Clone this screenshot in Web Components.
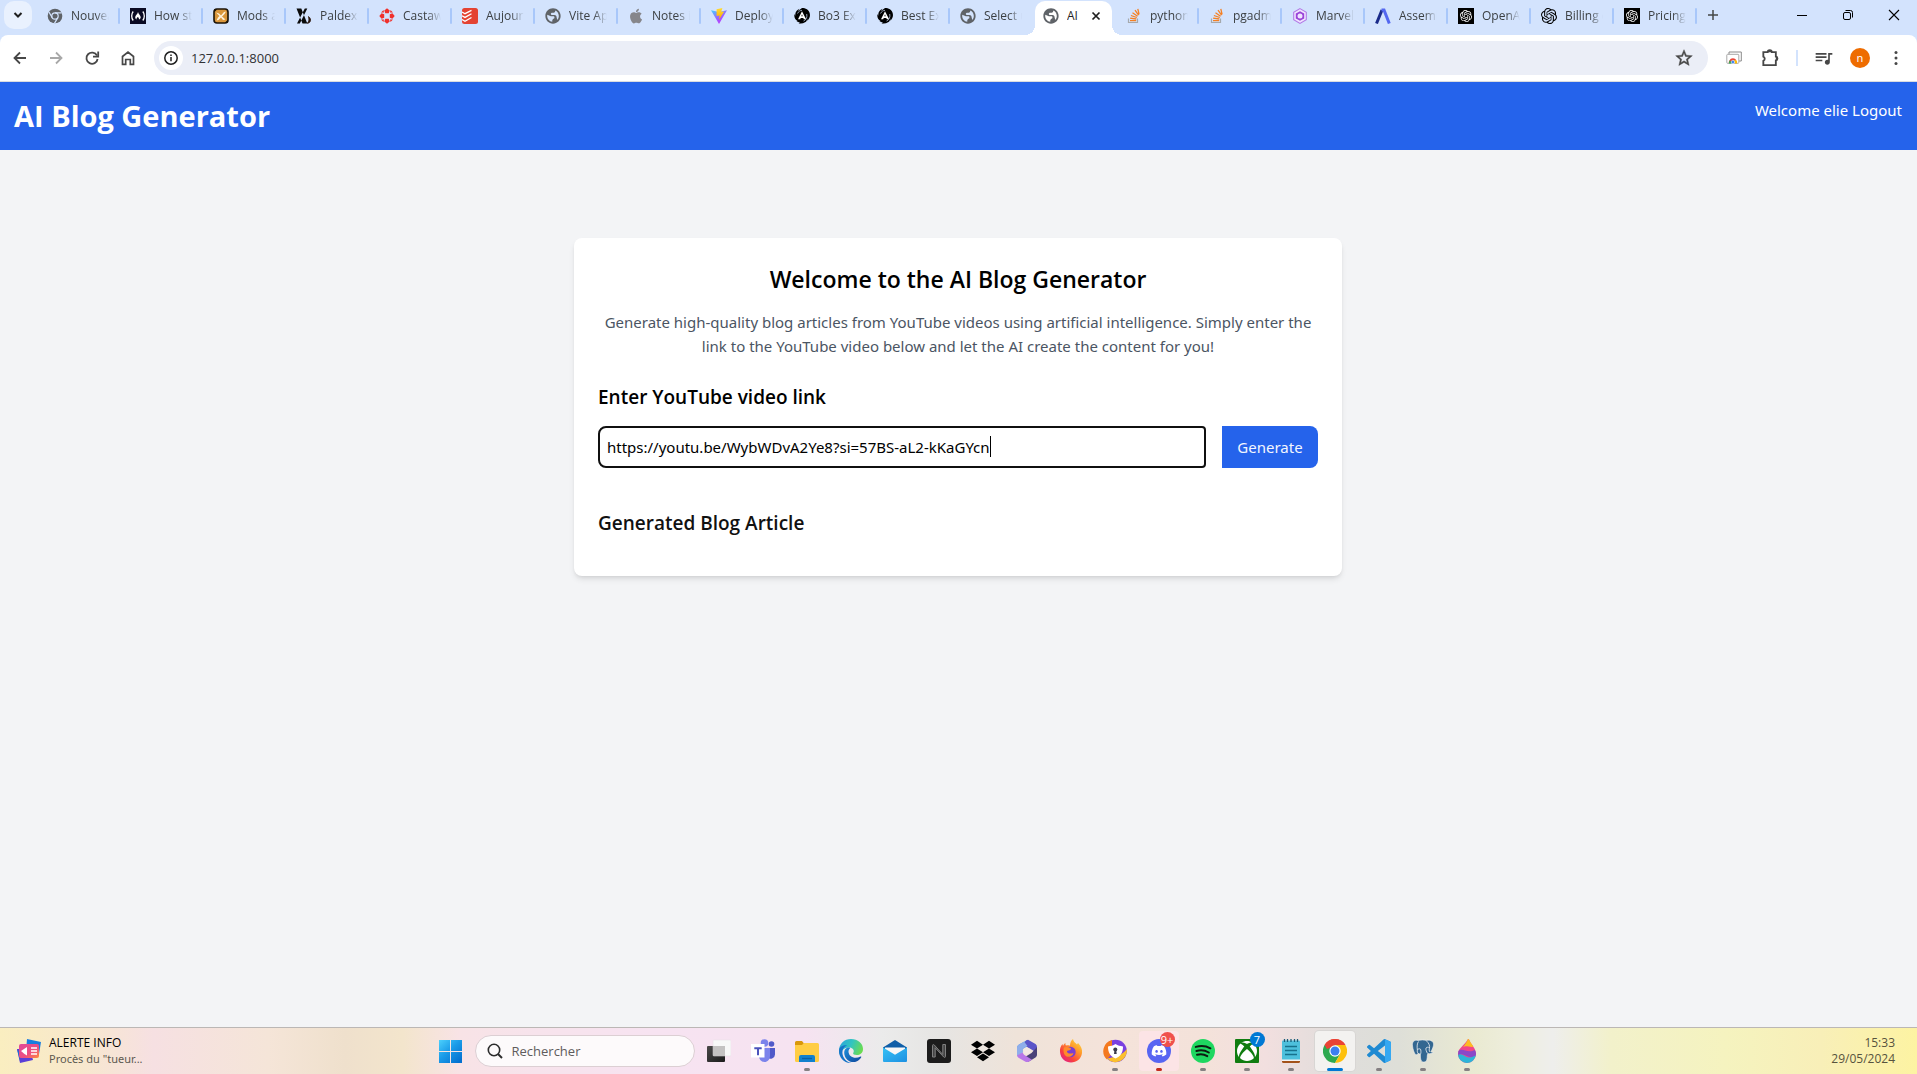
<!DOCTYPE html>
<html lang="fr">
<head>
<meta charset="utf-8">
<title>AI Blog Generator</title>
<style>
html, body { margin: 0; height: 100%; }
body { font-family: "Noto Sans", "Open Sans", sans-serif; font-size: 15px; line-height: 24px; color: #000; overflow: hidden; }
</style>
</head>
<body>
<desktop-screen></desktop-screen>
<script>
const openai = '<path d="M22.2819 9.8211a5.9847 5.9847 0 0 0-.5157-4.9108 6.0462 6.0462 0 0 0-6.5098-2.9A6.0651 6.0651 0 0 0 4.9807 4.1818a5.9847 5.9847 0 0 0-3.9977 2.9 6.0462 6.0462 0 0 0 .7427 7.0966 5.98 5.98 0 0 0 .511 4.9107 6.051 6.051 0 0 0 6.5146 2.9001A5.9847 5.9847 0 0 0 13.2599 24a6.0557 6.0557 0 0 0 5.7718-4.2058 5.9894 5.9894 0 0 0 3.9977-2.9001 6.0557 6.0557 0 0 0-.7475-7.0729zm-9.022 12.6081a4.4755 4.4755 0 0 1-2.8764-1.0408l.1419-.0804 4.7783-2.7582a.7948.7948 0 0 0 .3927-.6813v-6.7369l2.02 1.1686a.071.071 0 0 1 .038.052v5.5826a4.504 4.504 0 0 1-4.4945 4.4944zm-9.6607-4.1254a4.4708 4.4708 0 0 1-.5346-3.0137l.142.0852 4.783 2.7582a.7712.7712 0 0 0 .7806 0l5.8428-3.3685v2.3324a.0804.0804 0 0 1-.0332.0615L9.74 19.9502a4.4992 4.4992 0 0 1-6.1408-1.6464zM2.3408 7.8956a4.485 4.485 0 0 1 2.3655-1.9728V11.6a.7664.7664 0 0 0 .3879.6765l5.8144 3.3543-2.0201 1.1685a.0757.0757 0 0 1-.071 0l-4.8303-2.7865A4.504 4.504 0 0 1 2.3408 7.872zm16.5963 3.8558L13.1038 8.364 15.1192 7.2a.0757.0757 0 0 1 .071 0l4.8303 2.7913a4.4944 4.4944 0 0 1-.6765 8.1042v-5.6772a.79.79 0 0 0-.407-.667zm2.0107-3.0231l-.142-.0852-4.7735-2.7818a.7759.7759 0 0 0-.7854 0L9.409 9.2297V6.8974a.0662.0662 0 0 1 .0284-.0615l4.8303-2.7866a4.4992 4.4992 0 0 1 6.6802 4.66zM8.3065 12.863l-2.02-1.1638a.0804.0804 0 0 1-.038-.0567V6.0742a4.4992 4.4992 0 0 1 7.3757-3.4537l-.142.0805L8.704 5.459a.7948.7948 0 0 0-.3927.6813zm1.0976-2.3654l2.602-1.4998 2.6069 1.4998v2.9994l-2.5974 1.4997-2.6067-1.4997Z"/>';

// name: [viewBox, markup]
const ICONS = {
  chevron: ['0 0 16 16', '<path d="M4.5 6 8 9.5 11.5 6" fill="none" stroke="#1f1f1f" stroke-width="2"/>'],
  chromeGrey: ['0 0 24 24', '<circle cx="12" cy="12" r="11" fill="#5f6368"/><circle cx="12" cy="12" r="4.8" fill="none" stroke="#d3e3fd" stroke-width="1.8"/><path d="M12 7.2h10M7.8 14.4 2.9 6M16.2 14.4l-5 8.6" stroke="#d3e3fd" stroke-width="1.8"/>'],
  fcc: ['0 0 16 16', '<path fill="#0a0a23" d="M0 0h16v16H0z"/><path d="M3.2 3.5C1.2 6 1.2 10 3.2 12.5M12.8 3.5c2 2.500 2 6.500 0 9" fill="none" stroke="#fff" stroke-width="1.3"/><path d="M8 4c-.2 2-3 3.300-2.800 5.600.1 1 .8 1.700 1.500 1.900-.6-1 .2-1.800 1.200-2.600.6.8 1.500 1.700 1 2.600 1-.3 1.800-1.100 1.800-2.200C10.700 7.300 8.500 6 8 4z" fill="#fff"/>'],
  mods: ['0 0 16 16', '<rect x="1" y="1" width="14" height="14" rx="3" fill="#d9963b" stroke="#1c1408" stroke-width="1.600"/><path d="m3 4.500 3 1L8 7.500l3-3.500L13 3.500 11.500 6 9 8.500l3.500 3-2.500.5L8 9.500 5.500 12 3.500 12.500l1.500-3L6.500 8z" fill="#fff3dc"/><path d="m1 1 3 .5L1.500 4zM15 15l-3-.5 2.500-2.500z" fill="#1c1408"/>'],
  paldex: ['0 0 16 16', '<path d="M.5.500h4.800l6 15H6.500zM11.300.500H8.800L1 15.500h2.800z" fill="#0b0b0b"/><path d="M12.500 8.500c2 1.500 2.500 3.500 1.700 5-.6 1.200-1.700 1.800-3 1.700 1.600-1 2.200-2.700 1.300-6.700z" fill="#2b160c" stroke="#2b160c" stroke-width=".8"/>'],
  castaway: ['0 0 16 16', '<g fill="#f0302c"><path d="m8 .3 2.700 2.300-1 2.600H6.300l-1-2.600zM8 15.700l2.700-2.300-1-2.600H6.300l-1 2.600zM.3 8l2.300-2.700 2.600 1v3.400l-2.600 1zM15.700 8l-2.300-2.700-2.600 1v3.400l2.600 1z"/><path d="m2 4.500 2.500-2.500.5 2.500zM14 4.500 11.500 2 11 4.500zM2 11.500 4.500 14l.5-2.500zM14 11.500 11.500 14l-.5-2.500z"/></g>'],
  todoist: ['0 0 16 16', '<rect width="16" height="16" rx="2.500" fill="#e44332"/><path d="m0 4 3 1.700 6.500-3.400M0 7.700l3 1.700 6.500-3.600M0 11.500l3 1.700L9.500 9.500" fill="none" stroke="#fff" stroke-width="1.300"/>'],
  globe: ['1 1 22 22', '<circle cx="12" cy="12" r="9.500" fill="var(--globe-ground, #d3e3fd)"/><path fill="#5f6368" d="M12 1.500C6.200 1.500 1.500 6.200 1.500 12S6.200 22.500 12 22.500 22.500 17.800 22.500 12 17.800 1.500 12 1.500zm-1 18.430c-3.950-.49-7-3.850-7-7.930 0-.62.08-1.210.21-1.790L9 12.500h3.500c1 0 1.500.8 1.500 1.500 0 1.500-1 1.700-2 2l-1 1.930v2zm6.900-2.540L17 14c0-2-1-3.500-3-3.500h-3.500c-1 0-1.500-.5-1.500-1.200C9 8 10 7.500 11.500 7.500H13c1.100 0 2-.9 2-2v-.91c2.930 1.190 5 4.060 5 7.410 0 2.080-.8 3.970-2.100 5.390z"/>'],
  apple: ['0 0 24 24', '<path fill="#86868b" transform="translate(1 1) scale(.92)" d="M12.152 6.896c-.948 0-2.415-1.078-3.960-1.040-2.040.027-3.910 1.183-4.961 3.014-2.117 3.675-.546 9.103 1.519 12.090 1.013 1.454 2.208 3.090 3.792 3.039 1.520-.065 2.090-.987 3.935-.987 1.831 0 2.350.987 3.960.948 1.637-.026 2.676-1.480 3.676-2.948 1.156-1.688 1.636-3.325 1.662-3.415-.039-.013-3.182-1.221-3.220-4.857-.026-3.040 2.480-4.494 2.597-4.559-1.429-2.090-3.623-2.324-4.390-2.376-2-.156-3.675 1.090-4.610 1.090zM15.530 3.830c.843-1.012 1.400-2.427 1.245-3.830-1.207.052-2.662.805-3.532 1.818-.78.896-1.454 2.338-1.273 3.714 1.338.104 2.715-.688 3.559-1.701"/>'],
  vite: ['0 0 16 16', '<defs><linearGradient id="a" x1="0" y1="0" x2=".6" y2="1"><stop stop-color="#41d1ff"/><stop offset=".6" stop-color="#9b63fe"/><stop offset="1" stop-color="#bd34fe"/></linearGradient><linearGradient id="b" x1="0" y1="0" x2="0" y2="1"><stop stop-color="#ffdd35"/><stop offset="1" stop-color="#ffa800"/></linearGradient></defs><path d="M0 2.200 8 16l8-13.800L8 4z" fill="url(#a)"/><path d="m5.600 1.200 5.800-1.200-1.200 3.800 3-.4L8 11.800l.6-4.300-3 .5z" fill="url(#b)"/>'],
  arc: ['0 0 16 16', '<path d="M8 0c3.500 0 7 1.700 7.700 5.200.8 3-.2 5.800-2.700 7.600l1.200-2.800-2.200 3.800L9 15.300l-4.500.4L6 14.800 2.500 13.200l1-.2C1 11.500-.2 9 .5 6l.8 2C.8 4.500 3 1.800 5.500.8L4 3z"/><path d="M8 3.300 4 11.300h2.200l.5-1.200h2.600l.6 1.200h2.200zM8 6.300l.7 2H7.300z" fill="#fff" fill-rule="evenodd"/><path d="M3.500 5.500C4.500 3.500 6 2.500 8 2.300M12.700 6c.8 3-.5 6-3.200 7" fill="none" stroke="#d3e3fd" stroke-width=".7"/>'],
  stack: ['0 0 16 16', '<path d="M2.500 10.500v4h9v-4" fill="none" stroke="#a5a9ad" stroke-width="1.200"/><g stroke="#f48024" stroke-width="1.300"><path d="M4 12.600h6.200M4.100 10.200l6.200.8M4.900 7.500l5.900 2M6.500 4.700l5.100 3.500M9 2.200l3.600 5M11.800.8l1.300 5.500"/></g>'],
  hexagon: ['0 0 16 16', '<path d="m8 .6 6.300 3.700v7.400L8 15.400l-6.300-3.700V4.300z" fill="#f0e4ff" stroke="#b27be6" stroke-width="1.100"/><path d="m8 3.300 4.200 2.300v4.800L8 12.700l-4.200-2.300V5.600z" fill="#9a45d8"/><circle cx="8" cy="8" r="2.500" fill="#f0e4ff"/>'],
  assembly: ['0 0 16 16', '<path d="M1.500 15.500 7 2" fill="none" stroke="#1a2a8a" stroke-width="3"/><path d="M6.500 2h2.500l5.300 13.500" fill="none" stroke="#5468f0" stroke-width="3"/>'],
  openaiDark: ['0 0 24 24', '<path d="M0 0h24v24H0z"/><g fill="#fff" transform="translate(3 3) scale(.75)">' + openai + '</g>'],
  openai: ['0 0 24 24', openai],
  plus: ['0 0 16 16', '<path d="M8 3v10M3 8h10" stroke="#444746" stroke-width="1.500"/>'],
  closeSmall: ['0 0 16 16', '<path d="m4.500 4.500 7 7M11.500 4.500l-7 7" stroke="#1f1f1f" stroke-width="1.700"/>'],
  minimize: ['0 0 16 16', '<path d="M3 8.500h10" stroke="#000"/>'],
  restore: ['0 0 16 16', '<rect x="3.500" y="5.500" width="7" height="7" rx="1.500" fill="none" stroke="#000"/><path d="M5.500 3.500h5a2 2 0 0 1 2 2v5" fill="none" stroke="#000"/>'],
  close: ['0 0 16 16', '<path d="m3 3 10 10M13 3 3 13" stroke="#000" stroke-width="1.100"/>'],
  back: ['0 0 20 20', '<path d="M16 10H5M10 4.500 4.500 10l5.500 5.500" fill="none" stroke="#474747" stroke-width="1.800"/>'],
  forward: ['0 0 20 20', '<path d="M4 10h11M10 4.500l5.500 5.500-5.500 5.500" fill="none" stroke="#a8a8a8" stroke-width="1.800"/>'],
  reload: ['0 0 20 20', '<path d="M15 7.500A5.600 5.600 0 1 0 15.600 11" fill="none" stroke="#474747" stroke-width="1.800"/><path d="M16.200 3.500v5.200H11" fill="none" stroke="#474747" stroke-width="1.800"/>'],
  home: ['0 0 20 20', '<path d="M4.500 8.500 10 4l5.500 4.500V16.300h-3.200v-4.800H7.700v4.800H4.500z" fill="none" stroke="#474747" stroke-width="1.700"/>'],
  info: ['0 0 16 16', '<circle cx="8" cy="8" r="6.200" fill="none" stroke="#1f1f1f" stroke-width="1.500"/><path d="M8 7v4.300M8 4.600v1.500" stroke="#1f1f1f" stroke-width="1.500"/>'],
  star: ['0 0 24 24', '<path fill="#474747" stroke="#474747" stroke-width=".5" d="M22 9.240l-7.190-.62L12 2 9.190 8.630 2 9.240l5.460 4.730L5.820 21 12 17.270 18.180 21l-1.630-7.030L22 9.240zM12 15.400l-3.760 2.270 1-4.280-3.320-2.880 4.380-.38L12 6.100l1.710 4.040 4.380.38-3.320 2.880 1 4.280L12 15.400z"/>'],
  gallery: ['0 0 16 16', '<path d="M3 5V2h12.300v9H13" fill="none" stroke="#8b8b8b"/><rect x=".8" y="4.300" width="12" height="9" rx=".8" fill="#fff" stroke="#a8a8a8"/><path d="M2.800 13a4 4 0 0 1 .6-2.600 4 4 0 0 1 7-.2L9 11z" fill="#ea4335"/><path d="m3.400 10.400-.6 3h2.500l.7-1.400z" fill="#34a853"/><path d="M10.400 10.200H7.500L9 13.400h2a4 4 0 0 0-.6-3.200z" fill="#fbbc04"/><circle cx="6.900" cy="12" r="1.700" fill="#4285f4" stroke="#fff" stroke-width=".5"/>'],
  puzzle: ['0 0 24 24', '<path d="M4 5h5.200a2.500 2.500 0 0 1 5 0H19v5.200a2.400 2.400 0 0 1 0 4.700V20.500H4v-5.200a2.700 2.700 0 0 0 0-5z" fill="none" stroke="#474747" stroke-width="2.200"/><path d="M9.200 5a2.500 2.500 0 0 1 5 0zM19 10.200a2.400 2.400 0 0 1 0 4.700z" fill="#474747"/>'],
  music: ['0 0 24 24', '<path fill="#474747" d="M15 6H2v2h13V6zm0 4H2v2h13v-2zM2 16h8v-2H2v2zM17 6v8.180c-.31-.11-.65-.18-1-.18-1.660 0-3 1.340-3 3s1.340 3 3 3 3-1.340 3-3V8h3V6h-5z"/>'],
  dots: ['0 0 16 16', '<g fill="#474747"><circle cx="8" cy="2.500" r="1.500"/><circle cx="8" cy="8" r="1.500"/><circle cx="8" cy="13.500" r="1.500"/></g>'],
  news: ['0 0 24 24', '<defs><linearGradient id="a" x1="0" y1="0" x2="1" y2="1"><stop stop-color="#e0499b"/><stop offset=".6" stop-color="#ee4f80"/><stop offset="1" stop-color="#ff8a3d"/></linearGradient></defs><path d="m10 0 14 3-2 12-13-2z" fill="#1a7de0"/><path d="m0 10 3 14 13-3-3-11z" fill="#5a3fd8"/><path d="M0 10 3 22v-8z" fill="#1c6fd0"/><rect x="2" y="5" width="20" height="14" rx="2" fill="url(#a)"/><path d="m4 12 6-4v8.500L7.500 15z" fill="#fff"/><path d="M14 9h6M14 12h6M14 15h6" stroke="#fff" stroke-width="1.300"/>'],
  windows: ['0 0 23 23', '<defs><linearGradient id="a" gradientUnits="userSpaceOnUse" x1="0" y1="0" x2="20" y2="22"><stop stop-color="#4cd0fc"/><stop offset=".5" stop-color="#1a9be8"/><stop offset="1" stop-color="#0471d0"/></linearGradient></defs><path d="M0 0h11v11H0zM12 0h11v11H12zM0 12h11v11H0zM12 12h11v11H12z" fill="url(#a)"/>'],
  search: ['0 0 16 16', '<circle cx="7" cy="7" r="5.700" fill="none" stroke="#2b2b2b" stroke-width="1.600"/><path d="m11 11 4 4" stroke="#2b2b2b" stroke-width="1.900"/>'],
  taskview: ['0 0 24 24', '<defs><linearGradient id="a" x1="0" y1="0" x2="1" y2="1"><stop stop-color="#4a4949"/><stop offset="1" stop-color="#1b1b1b"/></linearGradient></defs><rect y="7" width="18" height="16" rx="1" fill="url(#a)"/><rect x="6" y="1" width="18" height="16" rx="1" fill="#f8f8f8" stroke="#e6dfe4" stroke-width=".5"/><path d="M6 7h12v10H6z" fill="#c4c2c2"/>'],
  teams: ['0 0 24 24', '<circle cx="13.500" cy="4" r="3.800" fill="#7b83eb"/><circle cx="20.500" cy="5" r="2.800" fill="#5059c9"/><path d="M17 9h7v6.500a4.500 4.500 0 0 1-7 3.500z" fill="#5059c9"/><path d="M8 9h11v7.500c0 4-2.500 6.500-5.500 6.500S8 20.500 8 17z" fill="#7b83eb"/><path d="M0 5h13.500v13.500H0z" fill="#fff"/><path d="M3.300 8.200h7.400v2H8v6H6v-6H3.300z" fill="#4b53bc"/>'],
  explorer: ['0 0 24 24', '<path d="M0 3.500A1.500 1.500 0 0 1 1.500 2H7l2 2.500L7 7H0z" fill="#d9980b"/><path d="M0 6h7l2-2h13.500A1.500 1.500 0 0 1 24 5.500v16a1.500 1.500 0 0 1-1.500 1.500h-21A1.500 1.500 0 0 1 0 21.500z" fill="#ffcd44"/><path d="M4 23v-5a2 2 0 0 1 2-2h12a2 2 0 0 1 2 2v5z" fill="#1181ce"/><path d="M7 19.500h10" stroke="#0a5fa5" stroke-width="1.300"/>'],
  edge: ['0 0 24 24', '<defs><linearGradient id="a" x1="0" y1=".2" x2="1" y2=".5"><stop stop-color="#2aa6dc"/><stop offset=".5" stop-color="#32c4c0"/><stop offset="1" stop-color="#6bdc50"/></linearGradient><linearGradient id="b" x1="0" y1="0" x2="1" y2="1"><stop stop-color="#1b8fdc"/><stop offset="1" stop-color="#10459a"/></linearGradient></defs><path d="M0 12C0 4.500 5.500 0 12 0c7 0 12 4.500 12 10 0 4-3 6-6.300 6-2.500 0-4-1-3.500-2 1.800-3-.8-5.500-4.200-5.500C4 8.500 1 13 1.500 17 .5 15.500 0 13.800 0 12z" fill="url(#a)"/><path d="M0 12c0-4 4-6.300 8-5.500-3 .8-4.800 4-4.600 7.500.3 5 4 9 9 9.900C5 24.500 0 18.500 0 12z" fill="#1674c8"/><path d="M8.500 8.600C5 10 4.500 14 6 17.500c2 4.500 7 7 12 4.700 1.800-.9 3.300-2.400 4.200-4 .3-.5-.2-.9-.7-.6-5.500 3-12 .4-12-5 0-1.800.8-2.800 1.800-3.700-.8-.4-1.900-.5-2.800-.3z" fill="url(#b)"/>'],
  mail: ['0 0 24 24', '<defs><linearGradient id="a" x1="0" y1="0" x2="1" y2="1"><stop stop-color="#35c1f5"/><stop offset="1" stop-color="#1c90e2"/></linearGradient></defs><path d="M0 8.500 12 1l12 7.500v3H0z" fill="#0f5ea8"/><path d="M2 8.500h20v3L12 17.500 2 11.500z" fill="#f7f7f7"/><path d="M0 8.500 12 15.800 24 8.500V22a1 1 0 0 1-1 1H1a1 1 0 0 1-1-1z" fill="url(#a)"/>'],
  notion: ['0 0 24 24', '<rect width="24" height="24" rx="3" fill="#1c1c1c"/><path d="M5.500 18V6.500c0-1 1-1.300 1.800-.5l8.500 9.500V5.500h2.700V17.500c0 1-1 1.300-1.800.5L8.200 8.800V18z" fill="#444" stroke="#808080" stroke-width="1"/>'],
  dropbox: ['0 0 24 24', '<path d="M6 1.807L0 5.629l6 3.822 6.001-3.822L6 1.807zM18 1.807l-6 3.822 6 3.822 6-3.822-6-3.822zM0 13.274l6 3.822 6.001-3.822L6 9.452l-6 3.822zM18 9.452l-6 3.822 6 3.822 6-3.822-6-3.822zM6 18.371l6.001 3.822 6-3.822-6-3.822L6 18.371z"/>'],
  m365: ['0 0 24 24', '<path d="M12.500 1 4 5.500Q2 6.700 2 9v7.500l5.500-3V10l5-3z" fill="#3f8fe6"/><path d="m11 1.500 2-.7 7.500 4.300Q22 6 22 8v6l-5.500-3.500L11 7.500 9 4.500z" fill="#5b55c8"/><path d="M9 2.500 12.500 7l-5 3L7.500 14 2 17V8.500Q2 6.500 4 5.400z" fill="#8faeea"/><path d="M22 8v8q0 1.500-1.500 2.400L13.500 22.800 10 18l6.500-4z" fill="#4a4178"/><path d="M2 16.500q.3 1.500 1.500 2.200l7 4q1.500.8 3 0l3.500-2-8-5-1.500-2.200z" fill="#b876e8"/><path d="m12 8.300 3.500 2v3.500l-3.500 2-3.500-2v-3.500z" fill="#f3e8e2"/>'],
  firefox: ['0 0 24 24', '<defs><linearGradient id="a" x1="1" y1="0" x2=".2" y2="1"><stop stop-color="#ffe94a"/><stop offset=".4" stop-color="#ff9a2a"/><stop offset=".75" stop-color="#f9403e"/><stop offset="1" stop-color="#e0208a"/></linearGradient></defs><path d="M1 13c-.3-3 .5-6 2.500-8l.5 2c.5-1.500 1.500-2.500 2.500-3-.2 1 0 2 .5 2.500 1.500-.4 3-.3 4 .2 0-3 1-5 3-6.700.3 2.500 2.500 4 4 5.500L19 4c3 2.500 4.500 6.500 4 10-.8 6-5.500 9.500-11 9.500S1.500 19.500 1 13z" fill="url(#a)"/><circle cx="11.500" cy="13" r="5.200" fill="#7a3fd0"/><path d="M5 8.500c2-1 4.500-.5 6.500.5 1.500 1-.5 2.300-2.500 2.500-1.500.3-1.300 2 .3 2.700 2 .8 3.800-.5 5.200.2-1.500 3-4.500 4-7 3S3.800 12 5 8.500z" fill="#ff8a2a"/>'],
  avast: ['0 0 24 24', '<circle cx="12.500" cy="12" r="11.300" fill="#7a3fe0"/><path d="M9 .9A11.500 11.500 0 0 0 4 20.500l5-6V6z" fill="#f47a1f"/><path d="M4 19.500A11.500 11.500 0 0 0 23.800 10C20 16 12 18 4 19.500z" fill="#fbc02d"/><path d="M5 7.500C8 7 10 6.500 12.500 5 15 6.500 17 7 20 7.500c0 6-2 9.500-7.500 12C7 17 5 13.500 5 7.500z" fill="#fff"/><circle cx="12.300" cy="10.500" r="2" fill="#3a3a4a"/><path d="M11.500 11h1.700l.5 4h-2.700z" fill="#3a3a4a"/>'],
  discord: ['0 0 24 24', '<circle cx="12" cy="12" r="12" fill="#5865f2"/><path fill="#fff" transform="translate(4.700 4.500) scale(.61)" d="M20.317 4.3698a19.7913 19.7913 0 00-4.8851-1.5152.0741.0741 0 00-.0785.0371c-.211.3753-.4447.8648-.6083 1.2495-1.8447-.2762-3.680-.2762-5.4868 0-.1636-.3933-.4058-.8742-.6177-1.2495a.077.077 0 00-.0785-.037 19.7363 19.7363 0 00-4.8852 1.515.0699.0699 0 00-.0321.0277C.5334 9.0458-.319 13.5799.0992 18.0578a.0824.0824 0 00.0312.0561c2.0528 1.5076 4.0413 2.4228 5.9929 3.0294a.0777.0777 0 00.0842-.0276c.4616-.6304.8731-1.2952 1.226-1.9942a.076.076 0 00-.0416-.1057c-.6528-.2476-1.2743-.5495-1.8722-.8923a.077.077 0 01-.0076-.1277c.1258-.0943.2517-.1923.3718-.2914a.0743.0743 0 01.0776-.0105c3.9278 1.7933 8.180 1.7933 12.0614 0a.0739.0739 0 01.0785.0095c.1202.099.246.1981.3728.2924a.077.077 0 01-.0066.1276 12.2986 12.2986 0 01-1.873.8914.0766.0766 0 00-.0407.1067c.3604.698.7719 1.3628 1.225 1.9932a.076.076 0 00.0842.0286c1.961-.6067 3.9495-1.5219 6.0023-3.0294a.077.077 0 00.0313-.0552c.5004-5.177-.8382-9.6739-3.5485-13.6604a.061.061 0 00-.0312-.0286zM8.020 15.3312c-1.1825 0-2.1569-1.0857-2.1569-2.419 0-1.3332.9555-2.4189 2.157-2.4189 1.2108 0 2.1757 1.0952 2.1568 2.419 0 1.3332-.9555 2.4189-2.1569 2.4189zm7.9748 0c-1.1825 0-2.1569-1.0857-2.1569-2.419 0-1.3332.9554-2.4189 2.1569-2.4189 1.2108 0 2.1757 1.0952 2.1568 2.419 0 1.3332-.946 2.4189-2.1568 2.4189Z"/>'],
  spotify: ['0 0 24 24', '<circle cx="12" cy="12" r="12" fill="#1ed760"/><path d="M4.800 7.900c4.700-1.400 10.300-1 14.600 1.400M5.400 12c4-1.200 8.700-.7 12.400 1.500M6 15.800c3.500-1 7.200-.6 10.300 1.300" fill="none" stroke="#0c1a10" stroke-width="2" stroke-linecap="round"/>'],
  xbox: ['0 0 24 24', '<rect width="24" height="24" rx="1" fill="#107c10"/><path fill="#fff" transform="translate(2 2) scale(.833)" d="M4.102 21.033C6.211 22.881 8.977 24 12 24c3.026 0 5.789-1.119 7.902-2.967 1.877-1.912-4.316-8.709-7.902-11.417-3.582 2.708-9.779 9.505-7.898 11.417zm11.160-14.406c2.500 2.961 7.484 10.313 6.076 12.912C23.002 17.480 24 14.861 24 12.004c0-3.340-1.365-6.362-3.570-8.536 0 0-.027-.022-.082-.042-.063-.022-.152-.045-.281-.045-.592 0-1.985.434-4.805 3.246zM3.654 3.426c-.057.02-.082.041-.086.042C1.365 5.642 0 8.664 0 12.004c0 2.854.998 5.473 2.661 7.533-1.401-2.605 3.579-9.951 6.080-12.910-2.820-2.813-4.216-3.245-4.806-3.245-.131 0-.223.021-.281.046v-.002zM12 3.551S9.055 1.828 6.755 1.746c-.903-.033-1.454.295-1.521.339C7.379.646 9.659 0 11.984 0H12c2.334 0 4.605.646 6.766 2.085-.068-.046-.615-.372-1.520-.339C14.946 1.828 12 3.545 12 3.545v.006z"/>'],
  notepad: ['0 0 24 24', '<rect x="3" y="1.500" width="18" height="20" rx="1" fill="#4dc0dc"/><path d="M3 21.500h18v1a1.500 1.500 0 0 1-1.500 1.500h-15A1.500 1.500 0 0 1 3 22.500z" fill="#a3521a"/><path d="M3 20.500h18v1.500H3z" fill="#f3f3f3"/><path d="M6 7.500h12M6 11.500h12M6 15.500h12" stroke="#17718c" stroke-width="1.500"/><path d="M5.500 0v3M8.500 0v3M12 0v3M15.500 0v3M18.500 0v3" stroke="#1a5d77" stroke-width="1.300"/>'],
  chrome: ['0 0 24 24', '<path d="M12 12 1.600 6A12 12 0 0 1 22.400 6z" fill="#ea4335"/><path d="M12 12 1.600 6A12 12 0 0 0 12 24l5.200-9z" fill="#2da94f"/><path d="M12 12V6h10.400A12 12 0 0 1 12 24l5.200-9z" fill="#fdc00c"/><path d="M12 6H1.600l5.200 9z" fill="#2da94f"/><path d="M1.600 6h20.800A12 12 0 0 0 1.600 6z" fill="#ea4335"/><path d="M12 6 6.800 9 4 10 1.600 6z" fill="#ea4335"/><circle cx="12" cy="12" r="5.700" fill="#fff"/><circle cx="12" cy="12" r="4.500" fill="#3c7ff0"/>'],
  vscode: ['0 0 24 24', '<path fill="#1f8ad2" d="M23.150 2.587L18.210.21a1.494 1.494 0 0 0-1.705.29l-9.460 8.630-4.120-3.128a.999.999 0 0 0-1.276.057L.327 7.261A1 1 0 0 0 .326 8.740L3.899 12 .326 15.260a1 1 0 0 0 .001 1.479L1.650 17.940a.999.999 0 0 0 1.276.057l4.120-3.128 9.460 8.630a1.492 1.492 0 0 0 1.704.29l4.942-2.377A1.500 1.500 0 0 0 24 20.060V3.939a1.500 1.500 0 0 0-.85-1.352zm-5.146 14.861L10.826 12l7.178-5.448v10.896z"/><path d="m18 .2 5.200 2.400q.8.400.8 1.400v16q0 1-.8 1.400L18 23.800z" fill="#35a8f2"/>'],
  postgres: ['0 0 24 24', '<path d="M7 1.500C3 .5 1 3 1.500 7c.4 3 1.500 7 3 8.500 1 .8 2-.2 2.800-1.200.5.5 1.200.7 2 .7.400 3-.4 7.500 3 8 3 .4 3.700-2 3.900-4.500.1-2 .1-3.500 1-4 1.500.5 4.300 0 5.300-1.200-1 0-2.500 0-2.500-.8 1.500-2.500 3.500-7 2-9.200C20 .7 17 1 15.500 1.500 13 .6 9.500.8 7 1.500z" fill="#336791" stroke="#f4f4f4" stroke-width=".6"/><path d="M7.500 2.500c-1.500 2-1.500 5-1.200 8 .2 2-.5 3 1 3.800M15.500 2c2.500 2 3.500 5 3 7-.5 1-.5 3 .5 4M9.500 15c.5-1 .5-2 .3-4-.2-1.500-1.500-1.500-3.500-.5M16.500 14.500c-1-2-2-4-1.500-5.500.8-1 2.500-1 3.500-.3" fill="none" stroke="#f4f4f4" stroke-width=".8"/>'],
  paint: ['0 0 24 24', '<path d="M13 0c1 0 1 .5 1.500 1.500C16.500 6 21 9.500 21 15a9 9 0 0 1-18 0C3 9 9 7 13 0z" fill="#f0468a"/><path d="M13 0c1 0 1 .5 1.500 1.500 1 2.200 2.500 4 4 6C16 9 11 6 8 7.800 10 6 11.800 3 13 0z" fill="#fdbb22"/><path d="M3.400 12c4-4 9 3 16.500-1 .7 1.200 1.100 2.500 1.100 4l-.5 2c-7 4-11-4-17.400-1z" fill="#8a48c8"/><path d="M3 16c4-2.500 7 2.500 11 2.500 3 0 5-1.500 6.800-2A9 9 0 0 1 3 16z" fill="#2cb4d8"/>']
};

// Base for every element: opens a shadow root from the class template.
class Base extends HTMLElement {
  constructor() { super(); this.attachShadow({ mode: 'open' }); }
  connectedCallback() {
    const t = document.createElement('template');
    t.innerHTML = `<style>*{box-sizing:border-box} button{font:inherit;color:inherit;background:none;border:0;padding:0;margin:0;cursor:pointer;display:flex;align-items:center;justify-content:center} h1,h2,p{margin:0} h1,h2,label{font-family:"Open Sans","Noto Sans",sans-serif}</style>` + this.render();
    this.shadowRoot.replaceChildren(t.content.cloneNode(true));
    this.ready?.();
  }
}

customElements.define('ui-icon', class extends Base {
  render() {
    const [box, body] = ICONS[this.getAttribute('name')];
    const size = this.getAttribute('size') || 16;
    return `<style>:host{display:block;flex:none} svg{display:block}</style><svg width="${size}" height="${size}" viewBox="${box}" aria-hidden="true">${body}</svg>`;
  }
});

customElements.define('browser-tab', class extends Base {
  render() {
    const active = this.hasAttribute('active');
    return `<style>
      :host{display:flex;flex:0 1 83px;min-width:0;height:34px;align-items:center}
      .tab{position:relative;flex:1;min-width:0;height:34px;display:flex;align-items:center;gap:8px;padding:0 8px 4px 8px;margin:0 3px;font-family:"Open Sans",sans-serif;font-size:12px;line-height:16px;color:#3c4043}
      .label{flex:none;width:38px;overflow:hidden;white-space:nowrap;-webkit-mask-image:linear-gradient(90deg,#000 65%,transparent);mask-image:linear-gradient(90deg,#000 65%,transparent)}
      .rule{width:2px;height:16px;margin:0 -1px 4px;background:#a8c7fa;border-radius:1px}
      :host([active]){--globe-ground:#fff}
      :host([active]) .tab{background:#fff;border-radius:10px 10px 0 0;padding-right:6px;color:#1f1f1f}
      :host([active]) .tab::before,:host([active]) .tab::after{content:"";position:absolute;bottom:0;width:10px;height:10px}
      :host([active]) .tab::before{right:100%;background:radial-gradient(circle at 0 0,transparent 10px,#fff 10px)}
      :host([active]) .tab::after{left:100%;background:radial-gradient(circle at 100% 0,transparent 10px,#fff 10px)}
      :host([active]) .label{width:13px;-webkit-mask-image:none;mask-image:none}
    </style>
    <div class="tab" role="tab" aria-selected="${active}"><ui-icon name="${this.getAttribute('icon')}"></ui-icon><span class="label"><slot></slot></span>${active ? '<button aria-label="Fermer"><ui-icon name="closeSmall"></ui-icon></button>' : ''}</div>${this.hasAttribute('rule') ? '<span class="rule"></span>' : ''}`;
  }
});

customElements.define('tab-strip', class extends Base {
  render() {
    const tabs = [['chromeGrey','Nouvea'],['fcc','How st'],['mods','Mods a'],['paldex','Paldex'],['castaway','Castaw'],['todoist','Aujour'],['globe','Vite Ap'],['apple','Notes i'],['vite','Deploy'],['arc','Bo3 Exp'],['arc','Best Ex'],['globe','Select u'],['globe','AI'],['stack','python'],['stack','pgadm'],['hexagon','Marvel'],['assembly','Asseml'],['openaiDark','OpenA'],['openai','Billing e'],['openaiDark','Pricing']];
    return `<style>
      :host{display:flex;height:35px;background:#d3e3fd;padding:1px 0 0 4px}
      .find{width:28px;height:28px;border-radius:10px;background:#e9f1fe;margin-right:4px;flex:none}
      .tabs{display:flex;flex:0 1 1660px;min-width:0}
      .new{width:34px;height:28px;flex:none}
      .win{margin-left:auto;display:flex;height:28px}
      .win button{width:46px}
    </style>
    <button class="find" aria-label="Rechercher dans les onglets"><ui-icon name="chevron"></ui-icon></button>
    <div class="tabs" role="tablist">${tabs.map(([i, t], n) => `<browser-tab icon="${i}" ${n === 12 ? 'active' : ''} ${n === 11 || n === 12 ? '' : 'rule'}>${t}</browser-tab>`).join('')}</div>
    <button class="new" aria-label="Nouvel onglet"><ui-icon name="plus"></ui-icon></button>
    <div class="win"><button aria-label="Réduire"><ui-icon name="minimize"></ui-icon></button><button aria-label="Restaurer"><ui-icon name="restore"></ui-icon></button><button aria-label="Fermer"><ui-icon name="close"></ui-icon></button></div>`;
  }
});

customElements.define('browser-toolbar', class extends Base {
  render() {
    return `<style>
      :host{display:block;background:#d3e3fd}
      .bar{display:flex;align-items:center;height:47px;padding:0 3px 0 2px;background:#fff;border-bottom:1px solid #dadce0;border-radius:8px 8px 0 0}
      .bar > button{width:36px;height:34px;flex:none}
      .address{flex:1;display:flex;align-items:center;height:34px;margin:0 8px;padding:0 14px 0 5px;border-radius:17px;background:#ebeef7;min-width:0}
      .site{width:24px;height:24px;border-radius:12px;background:#fff;flex:none}
      input{flex:1;min-width:0;border:0;background:none;outline:0;font-family:"Open Sans",sans-serif;font-size:13px;line-height:20px;color:#303134;padding:0 8px}
      .rule{width:2px;height:16px;background:#d3e3fd;margin:0 8px}
      .avatar{display:block;width:20px;height:20px;border-radius:10px;background:#ee6c00;color:#fff;font-size:11px;line-height:19px;text-align:center}
    </style>
    <div class="bar">
      <button aria-label="Précédent"><ui-icon name="back" size="20"></ui-icon></button>
      <button aria-label="Suivant"><ui-icon name="forward" size="20"></ui-icon></button>
      <button aria-label="Actualiser"><ui-icon name="reload" size="20"></ui-icon></button>
      <button aria-label="Accueil"><ui-icon name="home" size="20"></ui-icon></button>
      <div class="address"><button class="site" aria-label="Informations"><ui-icon name="info"></ui-icon></button><input aria-label="Adresse" value="127.0.0.1:8000"><button aria-label="Favori"><ui-icon name="star" size="20"></ui-icon></button></div>
      <button aria-label="Galerie"><ui-icon name="gallery"></ui-icon></button>
      <button aria-label="Extensions"><ui-icon name="puzzle" size="20"></ui-icon></button>
      <span class="rule"></span>
      <button aria-label="Multimédia"><ui-icon name="music" size="20"></ui-icon></button>
      <button aria-label="Profil"><span class="avatar">n</span></button>
      <button aria-label="Menu"><ui-icon name="dots"></ui-icon></button>
    </div>`;
  }
});

customElements.define('site-header', class extends Base {
  render() {
    return `<style>
      :host{display:flex;justify-content:space-between;align-items:flex-start;background:#2563eb;color:#fff;padding:16px 15px 16px 14px}
      h1{font-size:29px;line-height:36px;font-weight:700}
      a{color:inherit;text-decoration:none}
    </style><h1>AI Blog Generator</h1><div>Welcome elie <a href="#">Logout</a></div>`;
  }
});

customElements.define('blog-card', class extends Base {
  render() {
    return `<style>
      :host{display:block;width:100%;max-width:768px;background:#fff;border-radius:8px;padding:24px;box-shadow:0 4px 6px -1px rgba(0,0,0,.1),0 2px 4px -2px rgba(0,0,0,.1);box-sizing:border-box}
      header{text-align:center;margin-bottom:24px}
      h1{font-size:23px;line-height:32px;font-weight:600;padding-top:1px;margin-bottom:15px}
      p{color:#4b5563}
      h2,label{display:block;font-size:19px;line-height:28px;font-weight:600;padding-top:1px;margin-bottom:15px}
      h2{color:#111}
      .row{display:flex;gap:16px;margin-bottom:40px}
      .field{position:relative;flex:1;min-width:0}
      input{display:block;width:100%;height:42px;border:2px solid #101010;border-radius:8px 4px 4px 8px;padding:0 7px;font:inherit;color:#000;background:#fff;outline:0;caret-color:transparent}
      .caret{position:absolute;top:10px;width:1px;height:21px;background:#000}
      .go{width:96px;background:#2563eb;color:#f3f6fe;border-radius:0 8px 8px 0}
    </style>
    <header><h1>Welcome to the AI Blog Generator</h1><p>Generate high-quality blog articles from YouTube videos using artificial intelligence. Simply enter the link to the YouTube video below and let the AI create the content for you!</p></header>
    <label for="link">Enter YouTube video link</label>
    <div class="row"><div class="field"><input id="link" type="text" value="https://youtu.be/WybWDvA2Ye8?si=57BS-aL2-kKaGYcn"><span class="caret"></span></div><button class="go">Generate</button></div>
    <h2>Generated Blog Article</h2>`;
  }
  ready() {
    const input = this.shadowRoot.querySelector('input');
    const caret = this.shadowRoot.querySelector('.caret');
    const place = () => {
      const pen = document.createElement('canvas').getContext('2d');
      pen.font = getComputedStyle(input).font;
      caret.style.left = Math.round(9 + pen.measureText(input.value).width) + 'px';
    };
    input.addEventListener('input', place);
    place();
  }
});

customElements.define('task-item', class extends Base {
  render() {
    const badge = this.getAttribute('badge');
    return `<style>
      :host{display:block;flex:none;width:44px;height:46px;padding:3px 2px;box-sizing:border-box}
      button{position:relative;width:40px;height:40px;border-radius:4px}
      :host([dot]) button::after{content:"";position:absolute;bottom:0;left:17px;width:6px;height:3px;border-radius:2px;background:#858082}
      :host([dot=red]) button{background:#fce4e6} :host([dot=red]) button::after{background:#c42b1c}
      :host([dot=active]) button{background:#f3f2f0;box-shadow:0 0 0 1px #d8d6d4}
      :host([dot=active]) button::after{left:12px;width:16px;background:#0078d4}
      .badge{position:absolute;top:1px;right:2px;min-width:15px;height:15px;border-radius:8px;background:#0078d4;color:#fff;font-size:11px;line-height:15px;text-align:center}
      :host([dot=red]) .badge{background:#f0504c;right:4px}
    </style><button aria-label="${this.getAttribute('icon')}"><ui-icon name="${this.getAttribute('icon')}" size="24"></ui-icon>${badge ? `<span class="badge">${badge}</span>` : ''}</button>`;
  }
});

customElements.define('task-bar', class extends Base {
  render() {
    const apps = [['taskview'],['teams'],['explorer','on'],['edge'],['mail'],['notion'],['dropbox'],['m365'],['firefox'],['avast','on'],['discord','red','9+'],['spotify','on'],['xbox','on','7'],['notepad','on'],['chrome','active'],['vscode','on'],['postgres','on'],['paint','on']];
    return `<style>
      :host{display:grid;grid-template-columns:1fr auto 1fr;height:47px;box-sizing:border-box;border-top:1px solid #bbb7b5;font-family:"Open Sans",sans-serif;font-size:12px;line-height:16px;
        background:linear-gradient(90deg,#faeec0 0,#f8e8cc 4%,#f6e0e2 8%,#f5e5d8 14%,#efe0cc 18%,#f3e5cc 21%,#f8e3e6 24%,#f7e3ec 28%,#f7e3f1 34%,#f6e3f1 42%,#ebebeb 46%,#e6e5e3 49%,#efe3d9 53%,#f5e3da 58%,#f4e2da 63%,#f2dfdf 66%,#dfdddb 70%,#dedfd8 73%,#eaead2 77%,#eeeedd 79%,#eeeeec 81%,#f2f1cb 84%,#f5f3bf 90%,#f8efb8 95%,#fdf3a2 100%)}
      .news{display:flex;align-items:center;gap:8px;padding-left:17px;height:46px;justify-content:flex-start;text-align:left;justify-self:start}
      .news span,.clock span{display:block}
      .news span + span{color:#5d5850;font-family:"Noto Sans",sans-serif;font-size:11px}
      .mid{display:flex;align-items:center}
      .start{width:44px;height:46px}
      .search{display:flex;align-items:center;gap:9px;width:220px;height:32px;margin:0 2px;padding:0 11px;border:1px solid #dccfd3;border-radius:16px;background:#fdfafb}
      input{min-width:0;flex:1;border:0;padding:0;background:none;outline:0;font:inherit;font-size:13px;line-height:20px}
      input::placeholder{color:#5f5c5d;opacity:1}
      .clock{justify-self:end;padding:7px 22px 0 0;color:#57533e;text-align:right}
    </style>
    <button class="news"><ui-icon name="news" size="24"></ui-icon><div><span>ALERTE INFO</span><span>Procès du "tueur...</span></div></button>
    <div class="mid"><button class="start" aria-label="Démarrer"><ui-icon name="windows" size="23"></ui-icon></button>
      <div class="search"><ui-icon name="search"></ui-icon><input type="search" aria-label="Rechercher" placeholder="Rechercher"></div>
      ${apps.map(([n, d, b]) => `<task-item icon="${n}" ${d ? `dot="${d}"` : ''} ${b ? `badge="${b}"` : ''}></task-item>`).join('')}</div>
    <div class="clock"><span>15:33</span><span>29/05/2024</span></div>`;
  }
});

customElements.define('desktop-screen', class extends Base {
  render() {
    return `<style>
      :host{display:flex;flex-direction:column;height:100vh}
      main{flex:1;min-height:0;background:#f3f4f6;display:flex;justify-content:center;align-items:flex-start;padding:88px 1px 0 0}
    </style><tab-strip></tab-strip><browser-toolbar></browser-toolbar><site-header></site-header><main><blog-card></blog-card></main><task-bar></task-bar>`;
  }
});
</script>
</body>
</html>
